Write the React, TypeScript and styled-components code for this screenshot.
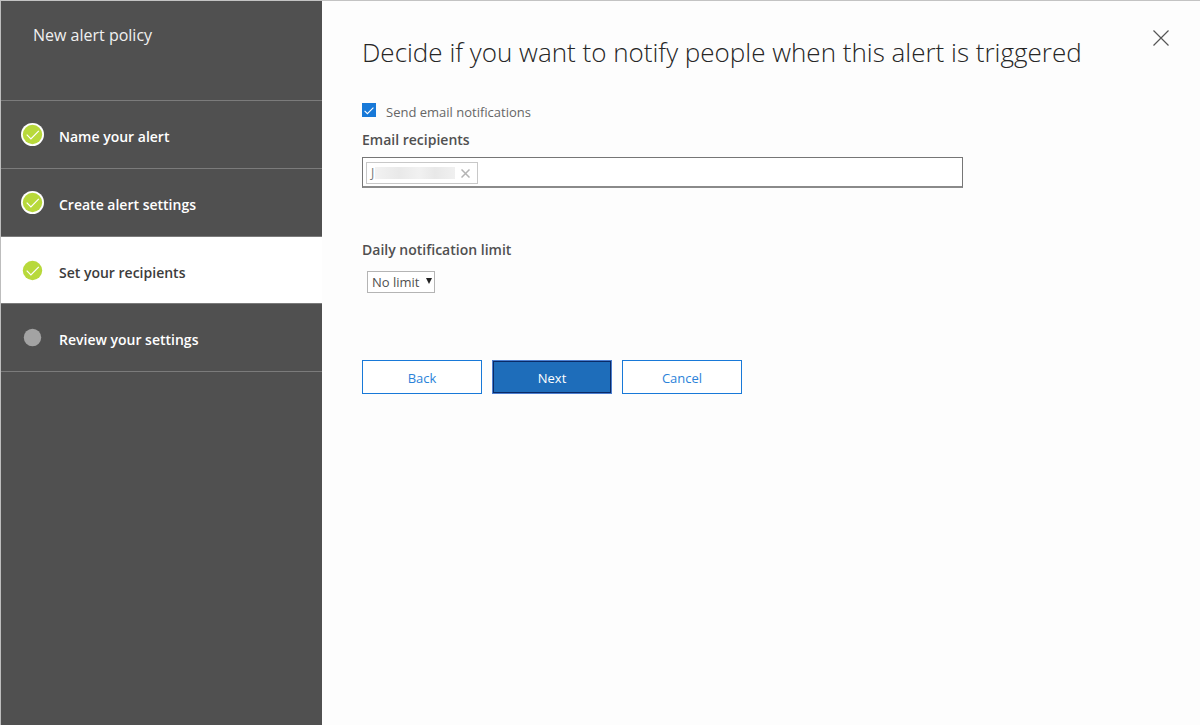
import React, { useState } from "react";
import styled, { createGlobalStyle, css } from "styled-components";

const GlobalStyle = createGlobalStyle`
  *, *::before, *::after { box-sizing: border-box; }
  body {
    margin: 0;
    background: #fdfdfd;
    color: #505050;
    font-family: "Open Sans", "Noto Sans", sans-serif;
    font-size: 14px;
    line-height: 20px;
  }
  button, input, select { font: inherit; color: inherit; }
`;

const Page = styled.div`
  display: flex;
  min-height: 100vh;
  border-top: 1px solid #c3c3c3;
  border-left: 1px solid #bdbdbd;
`;

const Sidebar = styled.aside`
  flex: 0 0 321px;
  background: #505050;
  color: #fff;
`;

const SidebarTitle = styled.h2`
  height: 100px;
  margin: 0;
  padding: 24px 32px;
  border-bottom: 1px solid #7b7b7b;
  font-size: 16px;
  font-weight: 400;
  color: #f0f0f0;
`;

const Steps = styled.ol`
  margin: 0;
  padding: 0;
  list-style: none;
`;

const Step = styled.li<{ $active: boolean }>`
  display: flex;
  align-items: center;
  gap: 14px;
  height: 68px;
  padding: 4px 20px 0;
  border-bottom: 1px solid #7b7b7b;
  font-weight: 600;
  ${(p) =>
    p.$active &&
    css`
      height: 67px;
      padding-top: 6px;
      background: #fff;
      color: #3c3c3c;
    `}
`;

const StepIcon = styled.svg`
  flex: none;
  width: 24px;
  height: 24px;
  margin-bottom: 4px;
`;

const Main = styled.main`
  flex: 1;
  min-width: 0;
  padding: 23px 25px 40px 40px;
`;

const Header = styled.header`
  display: flex;
  justify-content: space-between;
  align-items: flex-start;
`;

const Heading = styled.h1`
  margin: 0;
  padding-top: 8px;
  font-size: 26px;
  line-height: 40px;
  font-weight: 300;
  color: #262626;
`;

const IconButton = styled.button<{ $size: number }>`
  display: grid;
  flex: none;
  place-items: center;
  width: ${(p) => p.$size}px;
  height: ${(p) => p.$size}px;
  padding: 0;
  border: 0;
  background: none;
  cursor: pointer;
`;

const CheckRow = styled.label`
  display: flex;
  align-items: center;
  gap: 10px;
  width: fit-content;
  margin: 30px 0 8px;
  font-size: 13px;
  color: #666;
`;

const CheckBox = styled.span`
  display: grid;
  width: 14px;
  height: 14px;
  margin-bottom: 4px;
  > * { grid-area: 1 / 1; }
  svg { pointer-events: none; }
`;

const CheckInput = styled.input`
  appearance: none;
  width: 14px;
  height: 14px;
  margin: 0;
  border: 1px solid #1879d8;
  background: #fff;
  &:checked { background: #1879d8; }
`;

const FieldLabel = styled.label`
  display: block;
  font-weight: 600;
`;

const RecipientsBox = styled.div`
  display: flex;
  align-items: center;
  gap: 4px;
  width: 100%;
  max-width: 601px;
  height: 31px;
  margin-top: 7px;
  padding: 2px 3px 0;
  border: 1px solid #767676;
  border-bottom: 2px solid #8a8a8a;
  background: #fff;
`;

const Chip = styled.span`
  display: flex;
  align-items: center;
  height: 22px;
  padding: 0 2px 0 4px;
  border: 1px solid #c8c8c8;
  font-size: 12px;
  line-height: 20px;
  color: #777;
`;

const Redaction = styled.span`
  width: 80px;
  height: 12px;
  margin-left: 1px;
  background: linear-gradient(90deg, #f2f2f2, #e9e9e9 30%, #f1f1f1 55%, #e8e8e8 75%, #f0f0f0);
`;

const RecipientInput = styled.input`
  flex: 1;
  min-width: 0;
  height: 24px;
  padding: 0;
  border: 0;
  outline: 0;
  background: none;
`;

const LimitField = styled.div`
  margin-top: 52px;
`;

const SelectWrap = styled.div`
  display: grid;
  width: 68px;
  margin: 11px 0 0 5px;
  > * { grid-area: 1 / 1; }
  svg {
    place-self: center end;
    margin: 0 3px 2px 0;
    pointer-events: none;
  }
`;

const Select = styled.select`
  appearance: none;
  height: 22px;
  padding: 0 12px 0 4px;
  border: 1px solid #b4b4b4;
  border-radius: 0;
  background: #fff;
  font-size: 13px;
  line-height: 20px;
`;

const Actions = styled.div`
  display: flex;
  flex-wrap: wrap;
  gap: 10px;
  margin-top: 67px;
`;

const Button = styled.button<{ $primary?: boolean }>`
  width: 120px;
  height: 34px;
  padding: 2px 0 0;
  border: 1px solid #1879d8;
  background: #fff;
  color: #2b82d9;
  font-size: 13px;
  cursor: pointer;
  ${(p) =>
    p.$primary &&
    css`
      border-color: #4d7fd0;
      box-shadow: inset 0 0 0 1px #0a2a66;
      background: #1e6dba;
      color: #fff;
    `}
`;

type State = "done" | "current" | "todo";

const steps: { label: string; state: State }[] = [
  { label: "Name your alert", state: "done" },
  { label: "Create alert settings", state: "done" },
  { label: "Set your recipients", state: "current" },
  { label: "Review your settings", state: "todo" },
];

function StatusIcon({ state }: { state: State }) {
  if (state === "todo") {
    return (
      <StepIcon viewBox="0 0 24 24" aria-hidden="true">
        <circle cx="11.5" cy="11.5" r="8.7" fill="#a3a3a3" />
      </StepIcon>
    );
  }
  return (
    <StepIcon viewBox="0 0 24 24" aria-hidden="true">
      <circle cx="11.5" cy="11.5" r="11.5" fill="#fff" />
      <circle cx="11.5" cy="11.5" r="9.7" fill="#b8d93b" />
      <path d="M5.7 11.6 9.9 15.8 17.8 7.9" fill="none" stroke="#fff" strokeWidth="1.2" />
    </StepIcon>
  );
}

function Cross({ size, color, width }: { size: number; color: string; width: number }) {
  return (
    <svg width={size} height={size} viewBox={`0 0 ${size} ${size}`} aria-hidden="true">
      <path
        d={`M.5.5 ${size - 0.5} ${size - 0.5}M${size - 0.5}.5.5 ${size - 0.5}`}
        stroke={color}
        strokeWidth={width}
      />
    </svg>
  );
}

export default function App() {
  const [notify, setNotify] = useState(true);
  return (
    <>
      <GlobalStyle />
      <Page>
        <Sidebar>
          <SidebarTitle>New alert policy</SidebarTitle>
          <Steps>
            {steps.map((s) => (
              <Step key={s.label} $active={s.state === "current"}>
                <StatusIcon state={s.state} />
                {s.label}
              </Step>
            ))}
          </Steps>
        </Sidebar>
        <Main>
          <Header>
            <Heading>Decide if you want to notify people when this alert is triggered</Heading>
            <IconButton $size={28} type="button" aria-label="Close">
              <Cross size={16} color="#555" width={1.2} />
            </IconButton>
          </Header>
          <CheckRow>
            <CheckBox>
              <CheckInput
                type="checkbox"
                checked={notify}
                onChange={(e) => setNotify(e.target.checked)}
              />
              <svg width="14" height="14" viewBox="0 0 14 14" aria-hidden="true">
                <path d="M2.6 7.8 5.4 10.6 11.4 4.6" fill="none" stroke="#fff" strokeWidth="1.1" />
              </svg>
            </CheckBox>
            Send email notifications
          </CheckRow>
          <div>
            <FieldLabel htmlFor="recipients">Email recipients</FieldLabel>
            <RecipientsBox>
              <Chip>
                J
                <Redaction />
                <IconButton $size={20} type="button" aria-label="Remove recipient">
                  <Cross size={9} color="#b4b4b4" width={1.5} />
                </IconButton>
              </Chip>
              <RecipientInput id="recipients" type="text" />
            </RecipientsBox>
          </div>
          <LimitField>
            <FieldLabel htmlFor="limit">Daily notification limit</FieldLabel>
            <SelectWrap>
              <Select id="limit">
                <option>No limit</option>
              </Select>
              <svg width="6" height="6" viewBox="0 0 6 6" aria-hidden="true">
                <path d="M0 0h6L3 6z" fill="#222" />
              </svg>
            </SelectWrap>
          </LimitField>
          <Actions>
            <Button type="button">Back</Button>
            <Button type="button" $primary>Next</Button>
            <Button type="button">Cancel</Button>
          </Actions>
        </Main>
      </Page>
    </>
  );
}
